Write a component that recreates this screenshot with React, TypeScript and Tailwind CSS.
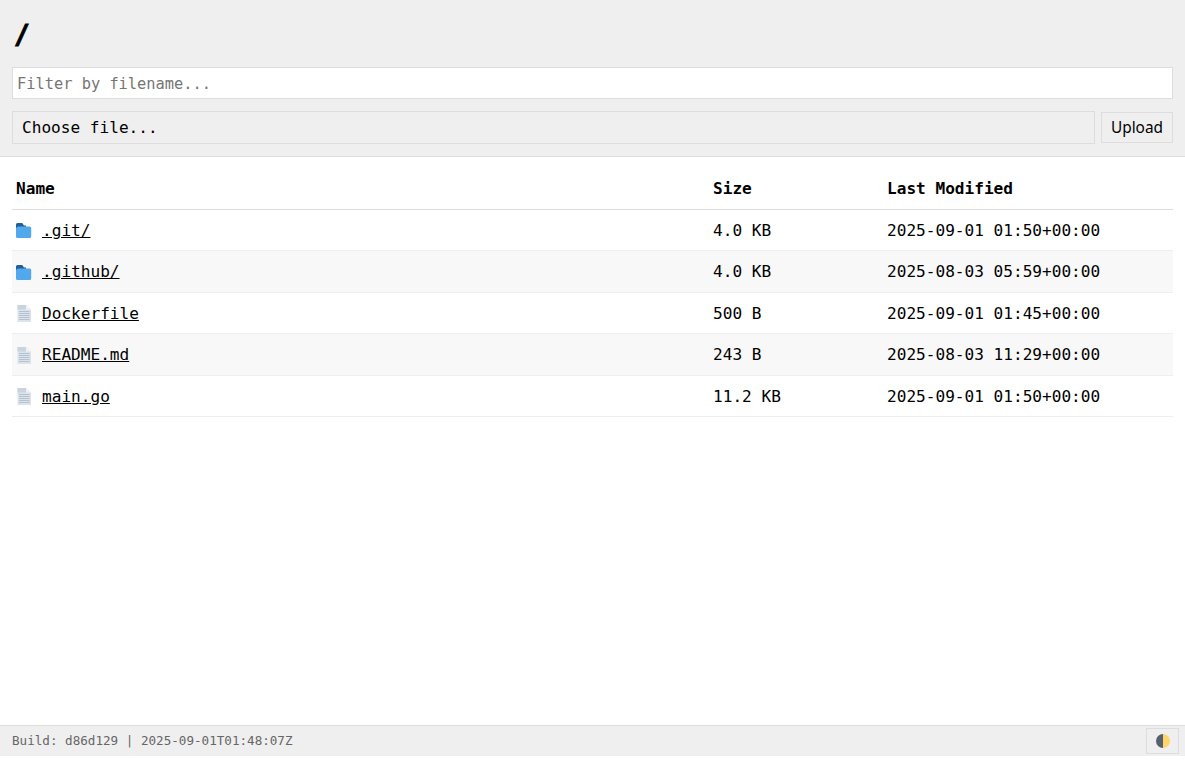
// App.tsx
const mono = "font-['DejaVu_Sans_Mono','Liberation_Mono',monospace]";

type FileRow = {
  name: string;
  size: string;
  modified: string;
  isDir: boolean;
};

const files: FileRow[] = [
  { name: ".git/", size: "4.0 KB", modified: "2025-09-01 01:50+00:00", isDir: true },
  { name: ".github/", size: "4.0 KB", modified: "2025-08-03 05:59+00:00", isDir: true },
  { name: "Dockerfile", size: "500 B", modified: "2025-09-01 01:45+00:00", isDir: false },
  { name: "README.md", size: "243 B", modified: "2025-08-03 11:29+00:00", isDir: false },
  { name: "main.go", size: "11.2 KB", modified: "2025-09-01 01:50+00:00", isDir: false },
];

function FolderIcon() {
  return (
    <svg width="16" height="15" viewBox="0 0 16 15">
      <path d="M0 1.500A1.500 1.500 0 0 1 1.500 0h4.700L8 2.500h2V8H2v4.500H1.500A1.500 1.500 0 0 1 0 11z" fill="#1f6099" />
      <path d="M2.800 3.500h10.900a1.500 1.500 0 0 1 1.500 1.500v8.500a1.500 1.500 0 0 1-1.500 1.500H1.500A1.500 1.500 0 0 1 0 13.500V6.300a2.800 2.800 0 0 1 2.800-2.800z" fill="#52a8ec" />
    </svg>
  );
}

function FileIcon() {
  return (
    <svg width="16" height="17" viewBox="0 0 16 17">
      <path d="M1.500 0h8.500l5 4.500V17H1.500z" fill="#dbe4ec" />
      <path d="M10 0l5 4.500h-5z" fill="#eef2f5" />
      <path d="M1.500 0H10v4.500H1.500z" fill="#c9d4de" />
      <path d="M3 6.500h10.500M3 8.500h10.500M3 10.500h10.500M3 12.500h10.500M3 14.500h10.500" stroke="#a3b3c2" strokeWidth="0.7" />
    </svg>
  );
}

export default function App() {
  return (
    <div className={`flex h-[756px] w-[1185px] flex-col bg-white text-[16.1px] text-black ${mono}`}>
      <header className="flex flex-col border-b border-[#ddd] bg-[#efefef] px-3 pb-3 pt-[20px]">
        <h1 className="mb-[20px] h-[27px] px-[2px] pt-px text-[26px] font-bold leading-[29px] [-webkit-text-stroke:1px_black]">/</h1>
        <input
          placeholder="Filter by filename..."
          className="mb-3 h-8 w-full border border-[#ddd] bg-white px-1 pt-px text-[15.35px] outline-none placeholder:text-[#757575]"
        />
        <div className="flex items-center gap-[6px]">
          <div className="flex h-[33px] flex-1 items-center border border-[#ddd] px-[9px] pt-px">Choose file...</div>
          <button className="flex h-[31px] w-[72px] items-center justify-center border border-[#ddd] font-['Noto_Sans',sans-serif] text-[15.4px]">
            Upload
          </button>
        </div>
      </header>

      <main className="flex-1 px-3 pt-[10px]">
        <table className="w-full border-collapse text-left">
          <thead>
            <tr className="h-[42px] border-b border-[#ddd]">
              <th className="w-[697px] px-1 pt-[2px] font-bold">Name</th>
              <th className="w-[174px] px-1 pt-[2px] font-bold">Size</th>
              <th className="px-1 pt-[2px] font-bold">Last Modified</th>
            </tr>
          </thead>
          <tbody>
            {files.map((file, i) => (
              <tr key={file.name} className={`h-[41.5px] border-b border-[#eee] ${i % 2 === 1 ? "bg-[#f8f8f8]" : ""}`}>
                <td className="px-1 pt-[2px]">
                  <span className="flex items-center gap-[10px]">
                    {file.isDir ? <FolderIcon /> : <FileIcon />}
                    <a href="#" className="underline">{file.name}</a>
                  </span>
                </td>
                <td className="px-1 pt-[2px]">{file.size}</td>
                <td className="px-1 pt-[2px]">{file.modified}</td>
              </tr>
            ))}
          </tbody>
        </table>
      </main>

      <footer className="flex h-[31px] items-center justify-between border-t border-[#ddd] bg-[#efefef] pl-3 pr-[6px]">
        <span className="pt-px text-[12.6px] text-[#666]">Build: d86d129 | 2025-09-01T01:48:07Z</span>
        <button className="flex h-[26px] w-[33px] items-center justify-center border border-[#ddd]">
          <svg width="14" height="14" viewBox="0 0 14 14">
            <path d="M7 0a7 7 0 0 0 0 14z" fill="#56616f" />
            <path d="M7 0a7 7 0 0 1 0 14z" fill="#ffd56b" />
          </svg>
        </button>
      </footer>
    </div>
  );
}
